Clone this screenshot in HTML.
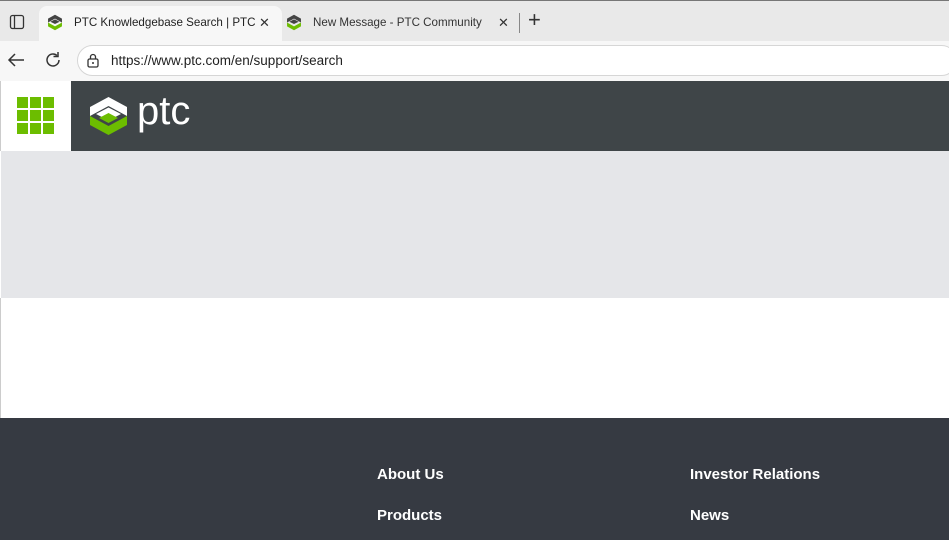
<!DOCTYPE html>
<html><head><meta charset="utf-8"><style>
*{margin:0;padding:0;box-sizing:border-box}
body{width:949px;height:540px;overflow:hidden;background:#fff;font-family:"Liberation Sans",Arial,sans-serif;position:relative}
.abs{position:absolute}
.tabbar{left:0;top:0;width:949px;height:41px;background:#e9e9e9;border-top:1px solid #777}
.tab{top:6px;height:35px;font-size:11.6px;color:#222;line-height:33px;white-space:nowrap}
.x{top:6px;font-size:13px;line-height:33px;color:#333}
.addr{left:0;top:41px;width:949px;height:40px;background:#f7f7f7}
.url{left:77px;top:45px;width:880px;height:31px;border:1px solid #d6d6d6;border-radius:16px;background:#fff;font-size:13.5px;color:#222;line-height:29px;padding-left:33px}
.hdr{left:0;top:81px;width:949px;height:70px;background:#3f4548}
.grid{left:0;top:81px;width:71px;height:70px;background:#fff;border-left:1px solid #ccc}
.sq{position:absolute;width:11px;height:11px;background:#6cbd00}
.band{left:1px;top:151px;width:948px;height:147px;background:#e5e6e9}
.white{left:0;top:298px;width:949px;height:120px;background:#fff;border-left:1px solid #ccc}
.foot{left:0;top:418px;width:949px;height:122px;background:#363a42}
.fl{color:#fff;font-weight:bold;font-size:15px}
</style></head><body>
<div class="abs tabbar"></div>
<svg class="abs" style="left:9px;top:14px" width="16" height="16" viewBox="0 0 16 16"><rect x="1.5" y="1.5" width="13" height="13" rx="2" fill="none" stroke="#333" stroke-width="1.3"/><line x1="5.5" y1="2" x2="5.5" y2="14" stroke="#333" stroke-width="1.3"/></svg>
<div class="abs" style="left:39px;top:6px;width:243px;height:36px;background:#f7f7f7;border-radius:8px 8px 0 0"></div>
<svg class="abs" style="left:47px;top:14px" width="16" height="17" viewBox="0 0 40 44"><path d="M20 2 L38 12 L38 22 L20 12 L2 22 L2 12Z" fill="#444"/><path d="M2 22 L20 32 L38 22 L38 32 L20 42 L2 32Z" fill="#6cbd00"/><path d="M8 20 L20 14 L32 20 L20 26Z" fill="#444"/></svg>
<div class="abs tab" style="left:74px">PTC Knowledgebase Search | PTC</div>
<div class="abs x" style="left:259px">✕</div>
<svg class="abs" style="left:286px;top:14px" width="16" height="17" viewBox="0 0 40 44"><path d="M20 2 L38 12 L38 22 L20 12 L2 22 L2 12Z" fill="#444"/><path d="M2 22 L20 32 L38 22 L38 32 L20 42 L2 32Z" fill="#6cbd00"/><path d="M8 20 L20 14 L32 20 L20 26Z" fill="#444"/></svg>
<div class="abs tab" style="left:313px;color:#333">New Message - PTC Community</div>
<div class="abs x" style="left:498px">✕</div>
<div class="abs" style="left:519px;top:13px;width:1px;height:20px;background:#888"></div>
<div class="abs" style="left:528px;top:7px;font-size:22px;color:#333">+</div>
<div class="abs addr"></div>
<svg class="abs" style="left:7px;top:52px" width="18" height="16" viewBox="0 0 18 16"><path d="M17 8H2M8 2L2 8L8 14" fill="none" stroke="#333" stroke-width="1.5"/></svg>
<svg class="abs" style="left:44px;top:51px" width="18" height="18" viewBox="0 0 18 18"><path d="M15 9A6 6 0 1 1 13 4.5" fill="none" stroke="#333" stroke-width="1.5"/><path d="M14 1V5.5H9.5" fill="none" stroke="#333" stroke-width="1.5"/></svg>
<div class="abs url">https://www.ptc.com/en/support/search</div>
<svg class="abs" style="left:86px;top:53px" width="14" height="15" viewBox="0 0 14 15"><rect x="2" y="6" width="10" height="8" rx="1.5" fill="none" stroke="#333" stroke-width="1.3"/><path d="M4.5 6V4a2.5 2.5 0 0 1 5 0v2" fill="none" stroke="#333" stroke-width="1.3"/><circle cx="7" cy="10" r="1" fill="#333"/></svg>
<div class="abs hdr"></div>
<div class="abs grid">
<div class="sq" style="left:16px;top:16px"></div><div class="sq" style="left:29px;top:16px"></div><div class="sq" style="left:42px;top:16px"></div>
<div class="sq" style="left:16px;top:29px"></div><div class="sq" style="left:29px;top:29px"></div><div class="sq" style="left:42px;top:29px"></div>
<div class="sq" style="left:16px;top:42px"></div><div class="sq" style="left:29px;top:42px"></div><div class="sq" style="left:42px;top:42px"></div>
</div>
<svg class="abs" style="left:90px;top:97px" width="37" height="38" viewBox="0 0 37 38"><path d="M18.5 0 L37 10 L37 19 L18.5 9 L0 19 L0 10Z" fill="#fff"/><path d="M0 19 L18.5 29 L37 19 L37 28 L18.5 38 L0 28Z" fill="#6cbd00"/><path d="M6 17 L18.5 10.5 L31 17 L18.5 23.5Z" fill="#fff"/><path d="M9 21 L18.5 16 L28 21 L18.5 26Z" fill="#6cbd00"/></svg>
<div class="abs" style="left:137px;top:89px;font-size:40px;color:#fff">ptc</div>
<div class="abs band"></div>
<div class="abs white"></div>
<div class="abs foot"></div>
<div class="abs fl" style="left:377px;top:466px">About Us</div>
<div class="abs fl" style="left:377px;top:507px">Products</div>
<div class="abs fl" style="left:690px;top:466px">Investor Relations</div>
<div class="abs fl" style="left:690px;top:507px">News</div>
</body></html>
